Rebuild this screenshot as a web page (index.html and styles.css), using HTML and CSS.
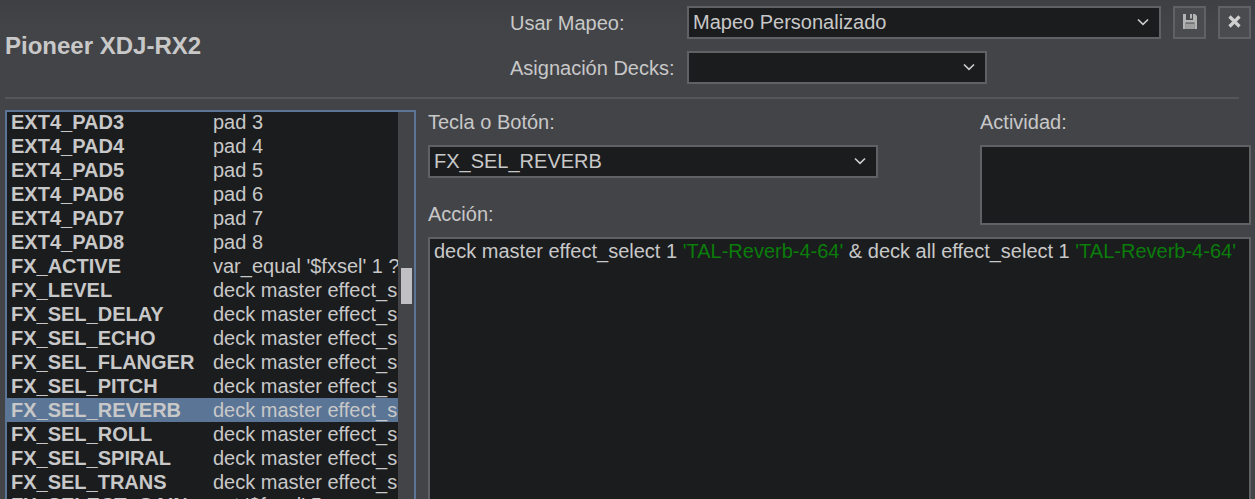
FILE: index.html
```html
<!DOCTYPE html>
<html lang="es">
<head>
<meta charset="utf-8">
<title>Pioneer XDJ-RX2</title>
<link rel="stylesheet" href="styles.css">
</head>
<body>
<div class="page">
  <header class="top">
    <h1 class="title">Pioneer XDJ-RX2</h1>
    <div class="mapping">
      <div class="map-row">
        <span class="lbl map-lbl">Usar Mapeo:</span>
        <div class="select sel-map"><span>Mapeo Personalizado</span><svg class="chev" viewBox="0 0 12 8"><path d="M1 1.500 6 6.300l5-4.800" fill="none" stroke="#ccc" stroke-width="1.700"/></svg></div>
        <button class="icon-btn save"><svg viewBox="0 0 14 15" width="14" height="15"><path fill="#b4b4b4" fill-rule="evenodd" d="M0 0h3v6h7V0h2l2 2v13H0V0zM7 0h2v4.500H7V0zM2.500 8.500V15h9V8.500h-9z"/><path fill="#b4b4b4" opacity=".8" d="M2.500 9.500h9V15h-9z"/></svg></button>
        <button class="icon-btn close"><svg viewBox="0 0 13 13" width="13" height="13"><path d="M1.500 1.500l10 10m0-10l-10 10" stroke="#cfcfcf" stroke-width="3.200" fill="none"/></svg></button>
      </div>
      <div class="map-row">
        <span class="lbl map-lbl">Asignación Decks:</span>
        <div class="select sel-deck"><svg class="chev" viewBox="0 0 12 8"><path d="M1 1.500 6 6.300l5-4.800" fill="none" stroke="#ccc" stroke-width="1.700"/></svg></div>
      </div>
    </div>
  </header>
  <div class="rule"></div>
  <main class="main">
    <section class="listbox">
      <div class="rows">
        <div class="row cut-top"><b>EXT4_PAD3</b><span>pad 3</span></div>
        <div class="row"><b>EXT4_PAD4</b><span>pad 4</span></div>
        <div class="row"><b>EXT4_PAD5</b><span>pad 5</span></div>
        <div class="row"><b>EXT4_PAD6</b><span>pad 6</span></div>
        <div class="row"><b>EXT4_PAD7</b><span>pad 7</span></div>
        <div class="row"><b>EXT4_PAD8</b><span>pad 8</span></div>
        <div class="row"><b>FX_ACTIVE</b><span>var_equal '$fxsel' 1 ? deck</span></div>
        <div class="row"><b>FX_LEVEL</b><span>deck master effect_slider</span></div>
        <div class="row"><b>FX_SEL_DELAY</b><span>deck master effect_select</span></div>
        <div class="row"><b>FX_SEL_ECHO</b><span>deck master effect_select</span></div>
        <div class="row"><b>FX_SEL_FLANGER</b><span>deck master effect_select</span></div>
        <div class="row"><b>FX_SEL_PITCH</b><span>deck master effect_select</span></div>
        <div class="row active"><b>FX_SEL_REVERB</b><span>deck master effect_select</span></div>
        <div class="row"><b>FX_SEL_ROLL</b><span>deck master effect_select</span></div>
        <div class="row"><b>FX_SEL_SPIRAL</b><span>deck master effect_select</span></div>
        <div class="row"><b>FX_SEL_TRANS</b><span>deck master effect_select</span></div>
        <div class="row last"><b>FX_SELECT_GAIN</b><span>set '$fxsel' 5</span></div>
      </div>
      <div class="scrolltrack"><div class="thumb"></div></div>
    </section>
    <section class="editor">
      <div class="editor-top">
        <div class="key-col">
          <div class="lbl head-lbl">Tecla o Botón:</div>
          <div class="select sel-key"><span>FX_SEL_REVERB</span><svg class="chev" viewBox="0 0 12 8"><path d="M1 1.500 6 6.300l5-4.800" fill="none" stroke="#ccc" stroke-width="1.700"/></svg></div>
          <div class="lbl accion-lbl">Acción:</div>
        </div>
        <div class="act-col">
          <div class="lbl head-lbl">Actividad:</div>
          <div class="activity"></div>
        </div>
      </div>
      <div class="code">deck master effect_select 1 <span class="str">'TAL-Reverb-4-64'</span> &amp; deck all effect_select 1 <span class="str">'TAL-Reverb-4-64'</span></div>
    </section>
  </main>
</div>
</body>
</html>
```
FILE: styles.css
```css
html, body {
  margin: 0;
  height: 100%;
  overflow: hidden;
  background: #434448;
}
.page {
  height: 499px;
  overflow: hidden;
  font-family: "Liberation Sans", Arial, sans-serif;
  font-size: 20px;
  color: #c8c8c8;
  background: linear-gradient(#3f4043 0, #434448 30px);
}
.top {
  display: flex;
  height: 97px;
}
.title {
  margin: 0;
  padding: 33px 0 0 5px;
  width: 510px;
  box-sizing: border-box;
  font-size: 24px;
  line-height: 26px;
  font-weight: bold;
  color: #c8c8c8;
}
.mapping {
  padding-top: 6px;
  display: flex;
  flex-direction: column;
  gap: 12px;
}
.map-row {
  display: flex;
  align-items: center;
  height: 33px;
}
.map-lbl { width: 177px; }
.lbl { line-height: 22px; }
.select {
  box-sizing: border-box;
  height: 33px;
  display: flex;
  align-items: center;
  justify-content: space-between;
  border: 2px solid #606165;
  background: #1b1c1e;
  padding: 0 10px 0 4px;
}
.chev {
  width: 12px;
  height: 8px;
  margin-left: auto;
  margin-bottom: 2px;
}
.sel-map { width: 474px; }
.sel-deck { width: 300px; }
.icon-btn {
  box-sizing: border-box;
  width: 33px;
  height: 33px;
  padding: 0 0 2px;
  border: 2px solid #606165;
  background: #4a4b4f;
  display: flex;
  align-items: center;
  justify-content: center;
}
.save { margin-left: 12px; }
.close { margin-left: 12px; }
.rule {
  height: 2px;
  margin-left: 5px;
  width: 1234px;
  background: #55565a;
}
.main {
  display: flex;
  padding: 11px 0 0 5px;
  gap: 12px;
}
.listbox {
  box-sizing: border-box;
  width: 411px;
  height: 400px;
  flex: none;
  display: flex;
  border: 2px solid #5b7596;
  border-bottom: 0;
  overflow: hidden;
}
.rows {
  width: 391px;
  background: #1b1c1e;
  overflow: hidden;
}
.row {
  display: flex;
  height: 24px;
  line-height: 24px;
  white-space: nowrap;
  overflow: hidden;
  padding-left: 4px;
}
.row b {
  width: 202px;
  flex: none;
  font-weight: bold;
}
.row span { overflow: hidden; }
.cut-top { height: 22px; line-height: 20px; }
.row.last { line-height: 22px; }
.row.active { background: #5b7596; }
.scrolltrack {
  flex: 1;
  background: #434448;
  position: relative;
}
.thumb {
  position: absolute;
  left: 3px;
  right: 2px;
  top: 156px;
  height: 36px;
  background: #c0c0c4;
}
.editor {
  flex: 1;
  min-width: 0;
  display: flex;
  flex-direction: column;
}
.editor-top { display: flex; }
.key-col { width: 552px; }
.head-lbl { margin-top: 1px; height: 22px; }
.sel-key {
  width: 450px;
  margin-top: 12px;
}
.accion-lbl { margin-top: 25px; height: 22px; }
.act-col { flex: 1; }
.activity {
  box-sizing: border-box;
  margin-top: 12px;
  width: 271px;
  height: 80px;
  border: 2px solid #606165;
  background: #1b1c1e;
}
.code {
  box-sizing: border-box;
  margin-top: 12px;
  height: 280px;
  width: 823px;
  border: 2px solid #606165;
  background: #1b1c1e;
  padding: 1px 4px;
  line-height: 22px;
  white-space: nowrap;
}
.str { color: #0a7d0a; }
```
